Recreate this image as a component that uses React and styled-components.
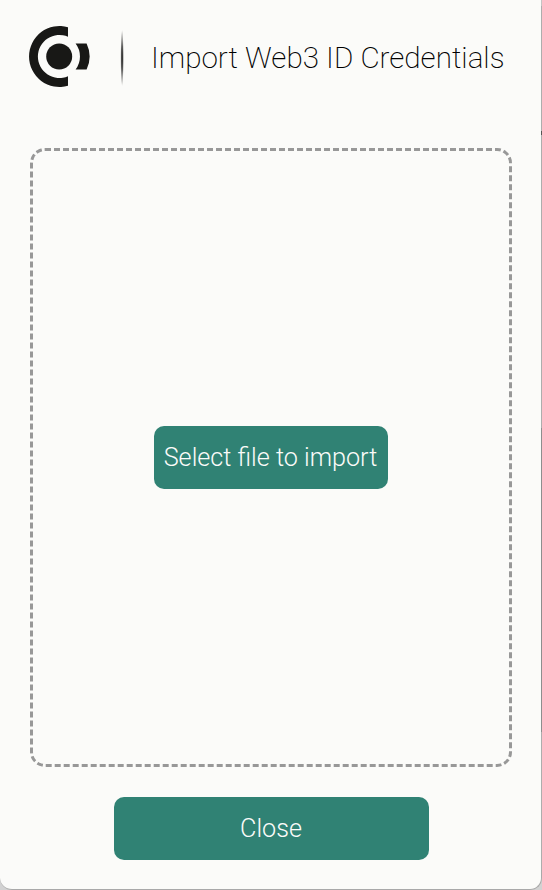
import React from 'react';
import styled, { createGlobalStyle } from 'styled-components';

const GlobalStyle = createGlobalStyle`
  *, *::before, *::after { box-sizing: border-box; }
  body { margin: 0; background: #d2d2d2; font-family: Roboto, "Liberation Sans", sans-serif; font-weight: 300; }
`;

const Window = styled.main`
  position: relative;
  display: flex;
  flex-direction: column;
  align-items: center;
  width: 542px;
  height: 890px;
  padding-bottom: 29px;
  background: #fbfbf9;
  border: solid #a9a9a9;
  border-width: 0 1px 1px 0;
  border-radius: 0 0 12px 12px;

  &::after {
    content: '';
    position: absolute;
    top: 0;
    right: -1px;
    width: 1px;
    height: 870px;
    background: linear-gradient(
      #c4c4c4 6px, #adadad 6px 131px, #555 131px 135px, #adadad 135px 428px,
      #8e8e8e 428px 732px, #adadad 732px
    );
  }
`;

const Header = styled.header`
  display: flex;
  align-items: center;
  align-self: stretch;
  height: 113px;
  padding-left: 29px;
`;

const Logo = styled.svg`
  display: block;
  width: 61px;
  height: 61px;
  fill: #181816;
`;

const Divider = styled.svg`
  display: block;
  width: 4px;
  height: 58px;
  margin: 2px 27px 0 30px;
`;

const Title = styled.h1`
  margin: 3px 0 0;
  font-size: 29.6px;
  font-weight: 200;
  line-height: 36px;
  letter-spacing: 0;
  white-space: nowrap;
  color: #000;
`;

const DropZone = styled.section`
  display: flex;
  align-items: center;
  justify-content: center;
  width: 482px;
  height: 619px;
  margin: 35px 0 30px;
  border: 3px dashed #989898;
  border-radius: 15px;
`;

const Button = styled.button`
  width: ${({ $width }) => $width}px;
  height: 63px;
  padding: 0;
  border: 0;
  border-radius: 10px;
  background: #308274;
  color: #fbfbf9;
  font: 300 25.2px/30px Roboto, "Liberation Sans", sans-serif;
  white-space: nowrap;
  cursor: pointer;
`;

const CloseButton = styled(Button)`
  margin-left: 1px;
`;

function ConcordiumLogo() {
  return (
    <Logo viewBox="0 0 61 61" aria-label="Concordium">
      <circle cx="30.2" cy="30.5" r="13" />
      <path d="M39 1.2A30.5 30.5 0 1 0 39 59.8V50.2A21.5 21.5 0 1 1 39 10.8Z" />
      <path d="M46.6 17.5H57.6A30.5 30.5 0 0 1 57.6 43.5H46.6A21.5 21.5 0 0 0 46.6 17.5Z" />
    </Logo>
  );
}

function HeaderDivider() {
  return (
    <Divider viewBox="0 0 4 58" aria-hidden="true">
      <defs>
        <radialGradient id="divider-fade">
          <stop offset="0" stopColor="#111" />
          <stop offset="0.45" stopColor="#333" stopOpacity="0.8" />
          <stop offset="1" stopColor="#555" stopOpacity="0" />
        </radialGradient>
      </defs>
      <ellipse cx="2.1" cy="29" rx="1.8" ry="29" fill="url(#divider-fade)" />
    </Divider>
  );
}

export default function App() {
  return (
    <>
      <GlobalStyle />
      <Window>
        <Header>
          <ConcordiumLogo />
          <HeaderDivider />
          <Title>Import Web3 ID Credentials</Title>
        </Header>
        <DropZone>
          <Button $width={234}>Select file to import</Button>
        </DropZone>
        <CloseButton $width={315}>Close</CloseButton>
      </Window>
    </>
  );
}
